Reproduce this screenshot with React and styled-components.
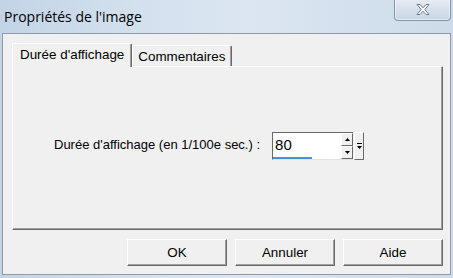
import React from 'react';
import styled, { createGlobalStyle } from 'styled-components';

const Global = createGlobalStyle`
  html, body {
    margin: 0;
    padding: 0;
    background: #c9d8e8;
  }
  body {
    width: 453px;
    height: 278px;
    overflow: hidden;
  }
`;

const App = () => (
  <Frame>
    <Global />
    <TitleBar>
      <Title>Propriétés de l'image</Title>
      <CloseButton>
        <svg width="16" height="13" viewBox="0 0 16 13">
          <path
            d="M2 1.5 L5 1.5 L8 4.8 L11 1.5 L14 1.5 L9.8 6.5 L14 11.5 L11 11.5 L8 8.2 L5 11.5 L2 11.5 L6.2 6.5 Z"
            fill="#ffffff"
            stroke="#6f7c8a"
            strokeWidth="1"
            strokeLinejoin="round"
          />
        </svg>
      </CloseButton>
    </TitleBar>
    <Client>
      <Tabs>
        <Tab $active>Durée d'affichage</Tab>
        <Tab>Commentaires</Tab>
      </Tabs>
      <Panel>
        <Field>
          <Label>Durée d'affichage (en 1/100e sec.) :</Label>
          <SpinBox>
            <Input>
              80
              <Highlight />
            </Input>
            <Arrows>
              <ArrowButton>
                <svg width="5" height="3" viewBox="0 0 5 3">
                  <path d="M0 3 L2.5 0 L5 3 Z" fill="#000" />
                </svg>
              </ArrowButton>
              <ArrowButton>
                <svg width="5" height="3" viewBox="0 0 5 3">
                  <path d="M0 0 L2.5 3 L5 0 Z" fill="#000" />
                </svg>
              </ArrowButton>
            </Arrows>
            <DropButton>
              <svg width="5" height="6" viewBox="0 0 5 6">
                <rect x="0" y="0" width="5" height="1" fill="#000" />
                <path d="M0 3 L2.5 6 L5 3 Z" fill="#000" />
              </svg>
            </DropButton>
          </SpinBox>
        </Field>
      </Panel>
      <Buttons>
        <Button>OK</Button>
        <Button>Annuler</Button>
        <Button>Aide</Button>
      </Buttons>
    </Client>
  </Frame>
);

const Frame = styled.div`
  width: 453px;
  height: 278px;
  display: flex;
  flex-direction: column;
  box-sizing: border-box;
  padding: 0 2px 3px 2px;
  background: linear-gradient(90deg, #c3d4e7 0%, #d3e0ee 30%, #dbe6f1 55%, #cddbea 100%);
  font-family: "Liberation Sans", Arial, sans-serif;
`;

const TitleBar = styled.div`
  height: 33px;
  display: flex;
  justify-content: space-between;
  align-items: flex-start;
`;

const Title = styled.div`
  margin-top: 7px;
  margin-left: 2px;
  font-family: "Open Sans", "Noto Sans", sans-serif;
  font-size: 14px;
  color: #000;
`;

const CloseButton = styled.div`
  width: 57px;
  height: 22px;
  margin-top: -1px;
  box-sizing: border-box;
  border: 1px solid #8594a6;
  border-top: none;
  border-radius: 0 0 4px 4px;
  background: linear-gradient(180deg, #e6edf5 0%, #d5e0ec 50%, #c8d6e5 100%);
  box-shadow: inset 0 0 0 1px rgba(255, 255, 255, 0.5);
  display: flex;
  align-items: center;
  justify-content: center;
`;

const Client = styled.div`
  flex: 1;
  display: flex;
  flex-direction: column;
  background: #f0f0f0;
  border: 1px solid #8f9aa6;
  padding: 8px 7px 0 9px;
`;

const Tabs = styled.div`
  display: flex;
  align-items: flex-end;
  height: 24px;
  position: relative;
  z-index: 1;
`;

const Tab = styled.div`
  box-sizing: border-box;
  height: ${(p) => (p.$active ? '24px' : '21px')};
  padding: ${(p) => (p.$active ? '3px 7px 0 7px' : '3px 6px 0 5px')};
  margin-bottom: ${(p) => (p.$active ? '-1px' : '0')};
  background: #f0f0f0;
  border-top: 1px solid #ffffff;
  border-left: 1px solid #ffffff;
  border-right: 1px solid #696969;
  box-shadow: inset -1px 0 0 #a0a0a0;
  border-radius: 2px 2px 0 0;
  font-size: 13.4px;
  color: #000;
  white-space: nowrap;
`;

const Panel = styled.div`
  height: 164px;
  box-sizing: border-box;
  border-top: 1px solid #ffffff;
  border-left: 1px solid #ffffff;
  border-right: 1px solid #696969;
  border-bottom: 1px solid #696969;
  box-shadow: inset -1px -1px 0 #a0a0a0;
  padding: 65px 0 0 41px;
`;

const Field = styled.div`
  display: flex;
  align-items: center;
  gap: 12px;
`;

const Label = styled.div`
  font-size: 13px;
  color: #000;
  margin-top: -3px;
`;

const SpinBox = styled.div`
  display: flex;
  align-items: stretch;
  height: 28px;
`;

const Input = styled.div`
  position: relative;
  width: 69px;
  box-sizing: border-box;
  background: #ffffff;
  border-top: 1px solid #696969;
  border-left: 1px solid #696969;
  border-bottom: 1px solid #e3e3e3;
  padding: 3px 0 0 2px;
  font-size: 15px;
  color: #000;
`;

const Highlight = styled.div`
  position: absolute;
  left: 0;
  bottom: 0;
  width: 39px;
  height: 2px;
  background: #4a8ed4;
`;

const Arrows = styled.div`
  display: flex;
  flex-direction: column;
  width: 12px;
  background: #ffffff;
  border-top: 1px solid #696969;
  border-bottom: 1px solid #e3e3e3;
`;

const ArrowButton = styled.div`
  flex: 1;
  display: flex;
  align-items: center;
  justify-content: center;
  background: #f0f0f0;
  border-top: 1px solid #ffffff;
  border-left: 1px solid #ffffff;
  border-right: 1px solid #696969;
  border-bottom: 1px solid #696969;
`;

const DropButton = styled.div`
  width: 8px;
  margin-left: 1px;
  display: flex;
  align-items: center;
  justify-content: center;
  background: #f0f0f0;
  border-top: 1px solid #ffffff;
  border-left: 1px solid #ffffff;
  border-right: 1px solid #696969;
  border-bottom: 1px solid #696969;
`;

const Buttons = styled.div`
  display: flex;
  justify-content: flex-end;
  gap: 8px;
  margin-top: 9px;
`;

const Button = styled.div`
  width: 100px;
  height: 27px;
  box-sizing: border-box;
  display: flex;
  align-items: center;
  justify-content: center;
  background: #f0f0f0;
  border-top: 1px solid #ffffff;
  border-left: 1px solid #ffffff;
  border-right: 1px solid #696969;
  border-bottom: 1px solid #696969;
  box-shadow: inset -1px -1px 0 #a0a0a0;
  font-size: 13.4px;
  color: #000;
`;

export default App;
